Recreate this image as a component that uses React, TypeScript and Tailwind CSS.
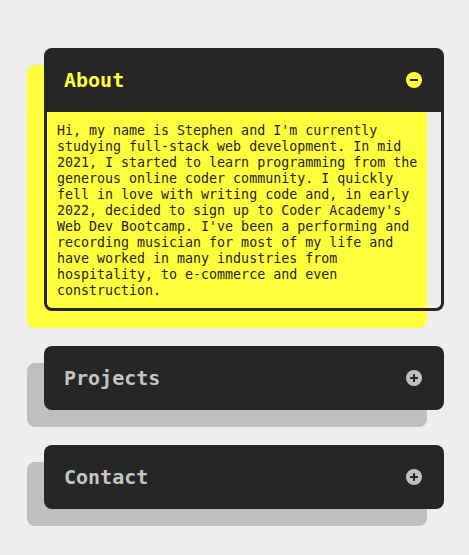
import React, { useState } from 'react';

const sections = [
  {
    id: 'about',
    title: 'About',
    body: "Hi, my name is Stephen and I'm currently studying full-stack web development. In mid 2021, I started to learn programming from the generous online coder community. I quickly fell in love with writing code and, in early 2022, decided to sign up to Coder Academy's Web Dev Bootcamp. I've been a performing and recording musician for most of my life and have worked in many industries from hospitality, to e-commerce and even construction.",
  },
  { id: 'projects', title: 'Projects', body: 'Coming soon.' },
  { id: 'contact', title: 'Contact', body: 'Coming soon.' },
];

const ToggleIcon = ({ open }: { open: boolean }) => (
  <svg width="16" height="16" viewBox="0 0 16 16" className={open ? 'text-[#ffff3c]' : 'text-[#c0c0c0]'}>
    <circle cx="8" cy="8" r="8" fill="currentColor" />
    <rect x="4" y="7" width="8" height="2" rx="0.5" fill="#262626" />
    {!open && <rect x="7" y="4" width="2" height="8" rx="0.5" fill="#262626" />}
  </svg>
);

const App: React.FC = () => {
  const [openId, setOpenId] = useState<string | null>('about');

  return (
    <div className="min-h-screen bg-[#eeeeee] pt-12 font-['DejaVu_Sans_Mono',monospace]">
      <div className="ml-[27px] flex w-[417px] flex-col gap-[35px] pl-[17px]">
        {sections.map(s => {
          const open = openId === s.id;
          return (
            <div key={s.id} className="relative">
              <div
                className={`absolute inset-0 -translate-x-[17px] translate-y-[17px] rounded-lg ${open ? 'bg-[#ffff3c]' : 'bg-[#bfbfbf]'}`}
              />
              <div className="relative">
                <button
                  onClick={() => setOpenId(open ? null : s.id)}
                  className={`flex h-16 w-full items-center justify-between bg-[#262626] pl-5 pr-[22px] text-[20px] font-bold ${open ? 'rounded-t-lg text-[#ffff3c]' : 'rounded-lg text-[#c4c4c4]'}`}
                >
                  <span>{s.title}</span>
                  <ToggleIcon open={open} />
                </button>
                {open && (
                  <div className="rounded-b-lg border-[3px] border-t-0 border-[#262626] px-[10px] pt-[11px] pb-[9px] text-[13.3px] leading-4 text-[#262626]">
                    {s.body}
                  </div>
                )}
              </div>
            </div>
          );
        })}
      </div>
    </div>
  );
};

export default App;
